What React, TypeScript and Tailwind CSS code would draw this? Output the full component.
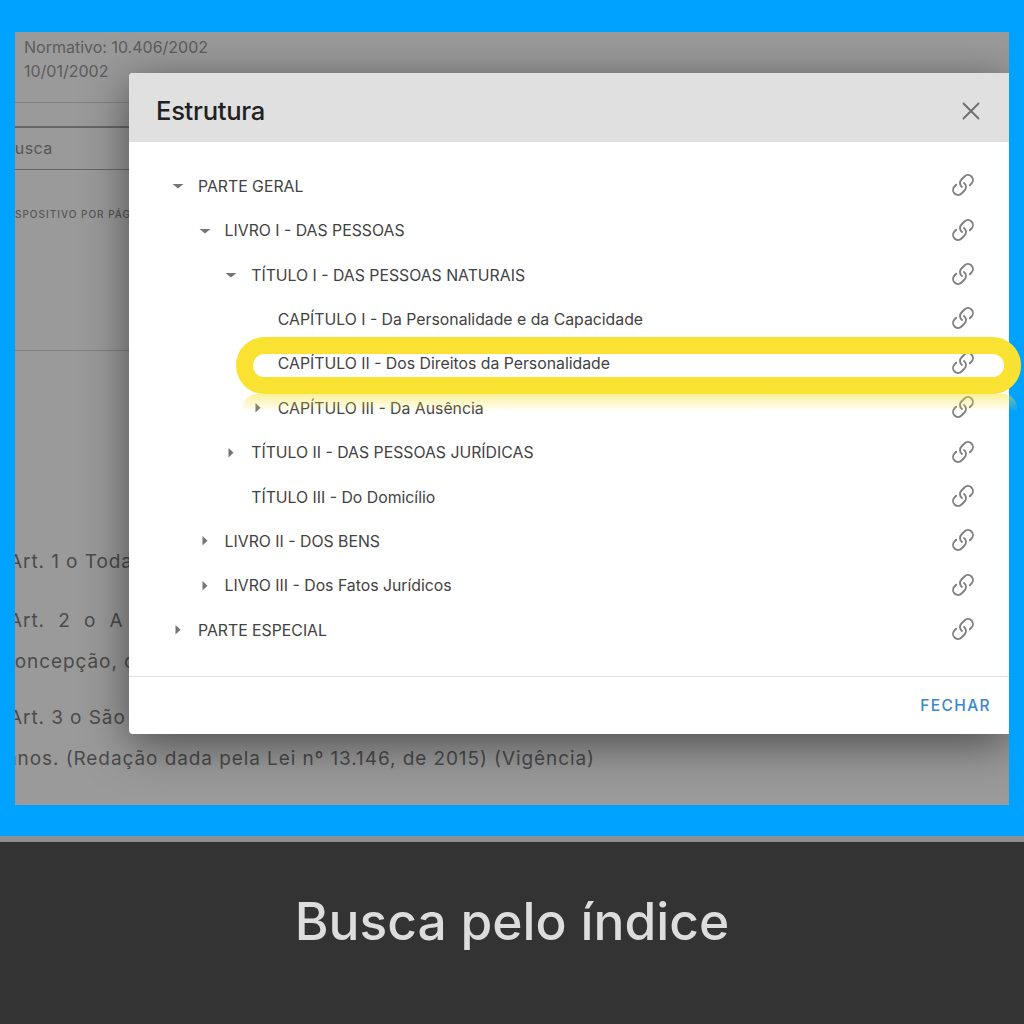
import React from 'react';
import { Link as LinkIcon, X } from 'lucide-react';

type Row = { label: string; depth: number; caret?: 'down' | 'right' };

const ROWS: Row[] = [
  { label: 'PARTE GERAL', depth: 0, caret: 'down' },
  { label: 'LIVRO I - DAS PESSOAS', depth: 1, caret: 'down' },
  { label: 'TÍTULO I - DAS PESSOAS NATURAIS', depth: 2, caret: 'down' },
  { label: 'CAPÍTULO I - Da Personalidade e da Capacidade', depth: 3 },
  { label: 'CAPÍTULO II - Dos Direitos da Personalidade', depth: 3 },
  { label: 'CAPÍTULO III - Da Ausência', depth: 3, caret: 'right' },
  { label: 'TÍTULO II - DAS PESSOAS JURÍDICAS', depth: 2, caret: 'right' },
  { label: 'TÍTULO III - Do Domicílio', depth: 2 },
  { label: 'LIVRO II - DOS BENS', depth: 1, caret: 'right' },
  { label: 'LIVRO III - Dos Fatos Jurídicos', depth: 1, caret: 'right' },
  { label: 'PARTE ESPECIAL', depth: 0, caret: 'right' },
];

const Caret = ({ dir }: { dir: 'down' | 'right' }) => (
  <svg width="14" height="12" viewBox="0 0 14 12" className="text-[#757575]">
    {dir === 'down' ? <path d="M1.5 4h11L7 8.5z" fill="currentColor" /> : <path d="M4.5 1v9.5L9.5 5.8z" fill="currentColor" />}
  </svg>
);

const App: React.FC = () => {
  return (
    <div className="w-[1024px] h-[1024px] flex flex-col bg-[#333333] overflow-hidden" style={{ fontFamily: 'Inter, "Noto Sans", sans-serif' }}>
      <div className="h-[836px] bg-[#00a2ff] pt-[32px] px-[15px]">
        {/* dimmed page behind the dialog */}
        <div className="relative h-[773px] bg-[#9a9a9a] overflow-hidden text-[#4a4a4a]">
          <div className="pl-[9px] pt-[3px] h-[52px] text-[16px] leading-[24px] text-[#5c5c5c]">
            <p>Normativo: 10.406/2002</p>
            <p>10/01/2002</p>
          </div>
          <div className="mt-[18px] border-t border-[#808080]" />
          <div className="mt-[23px] border-t-2 border-[#666666]" />
          <div className="h-[42px] pb-[2px] border-b border-[#666666] flex items-center text-[16px] -ml-[11px] tracking-[0.4px] text-[#555555]">Busca</div>
          <div className="mt-[37px] -ml-[12px] text-[10px] leading-[14px] tracking-[1px] font-medium text-[#555555] whitespace-nowrap">DISPOSITIVO POR PÁGINA</div>
          <div className="mt-[129px] border-t border-[#808080]" />
          <div className="mt-[197px] -ml-[6px] text-[19px] leading-[28px] tracking-[0.92px]">
            <p className="whitespace-nowrap">Art. 1 o Toda pessoa</p>
            <p className="mt-[31px] whitespace-nowrap [word-spacing:7px]">Art. 2 o A personalidade</p>
            <p className="mt-[13px] whitespace-nowrap -ml-[6px]">concepção, os direitos</p>
            <p className="mt-[28px] whitespace-nowrap">Art. 3 o São absolutamente</p>
            <p className="mt-[13px] whitespace-nowrap -ml-[3px]">anos. (Redação dada pela Lei nº 13.146, de 2015) (Vigência)</p>
          </div>

          <div className="absolute left-[114px] right-0 top-[41px] h-[661px] bg-white rounded-l-[4px] flex flex-col shadow-[0_10px_45px_rgba(0,0,0,0.5)]">
            <div className="h-[69px] shrink-0 bg-[#e0e0e0] rounded-tl-[4px] flex items-center justify-between pl-[27px] pr-[23px]">
              <span className="pt-[7px] text-[25.6px] font-medium text-[#212121] tracking-[-0.3px]">Estrutura</span>
              <X className="w-[30px] h-[30px] mt-[6px] text-[#6f6f6f]" strokeWidth={1.5} />
            </div>
            <div className="flex-1 pt-[22px] pr-[34px] pl-[42px]">
              {ROWS.map((row) => (
                <div key={row.label} className="h-[44.4px] flex items-center">
                  <div className="flex items-center flex-1" style={{ paddingLeft: row.depth * 26.6 }}>
                    <span className="w-[27px] shrink-0 flex items-center">{row.caret && <Caret dir={row.caret} />}</span>
                    <span className="pt-[1px] text-[15.8px] text-[#424242] whitespace-nowrap">{row.label}</span>
                  </div>
                  <LinkIcon className="w-[24px] h-[24px] text-[#808080] -scale-y-100 rotate-90 -translate-y-[1px]" strokeWidth={1.9} />
                </div>
              ))}
            </div>
            <div className="h-[58px] shrink-0 border-t border-[#e0e0e0] flex items-center justify-end pr-[18px] text-[15.5px] font-medium tracking-[1.4px] text-[#3a87c9]">
              FECHAR
            </div>
          </div>
        </div>
      </div>
      <div className="h-[6px] bg-[#8f8f8f]" />
      <div className="flex-1 flex items-center justify-center">
        <span className="text-[51.5px] font-[550] text-[#dddddd] mb-[22px]">Busca pelo índice</span>
      </div>

      {/* yellow callout over the dialog row */}
      <div className="absolute left-[236px] top-[337px] w-[785px] h-[57px] rounded-[29px] border-[17px] border-[#f9e232]" />
      <div className="absolute left-[243px] top-[394px] w-[774px] h-[18px] rounded-t-[14px] bg-gradient-to-b from-[#f9e232]/50 to-transparent" />
    </div>
  );
};

export default App;
